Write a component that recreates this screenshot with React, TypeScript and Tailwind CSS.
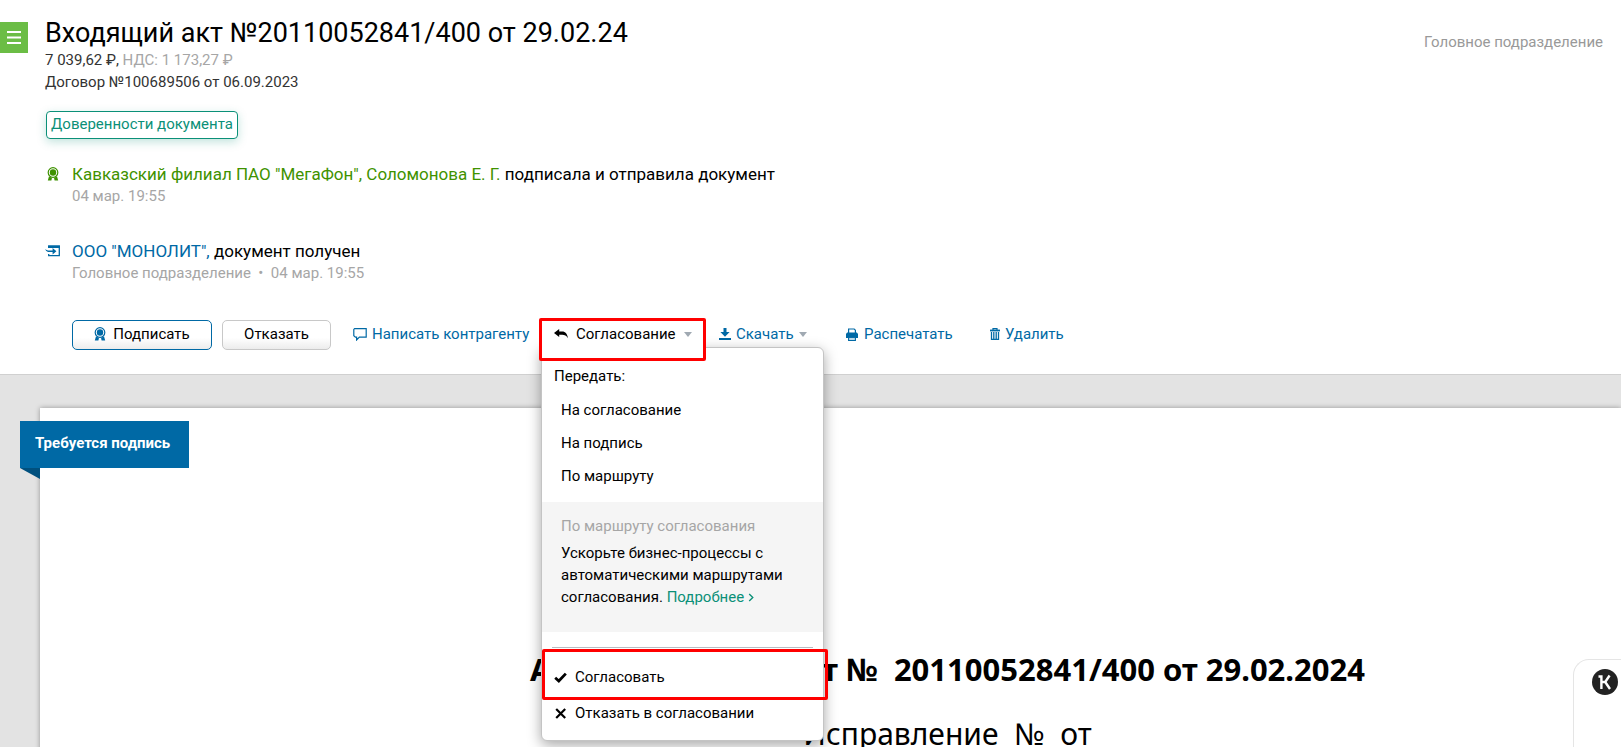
import type { ReactNode } from 'react';

interface IconProps {
  className?: string;
}

function SealIcon({ className }: IconProps) {
  return (
    <svg viewBox="0 0 12 14" className={className} aria-hidden>
      <circle cx="6" cy="5.5" r="4.8" fill="none" stroke="currentColor" strokeWidth="1.2" />
      <circle cx="6" cy="5.5" r="3.2" fill="currentColor" />
      <path d="M2 9.2 0.8 13.6h3.6L5 10.8h2l.6 2.8h3.6L10 9.2 7.8 10.6H4.2Z" fill="currentColor" />
    </svg>
  );
}

function IncomingIcon({ className }: IconProps) {
  return (
    <svg viewBox="0 0 15 12" className={className} aria-hidden>
      <path d="M3.7 3V1h10.6v9.6H3.7V9" fill="none" stroke="currentColor" strokeWidth="1.3" />
      <path d="M3 1h12v2H3Z" fill="currentColor" />
      <path d="M0 4.2 3 5.4h4.6V3L11.4 6.2 7.6 9.4V7H3Q1.2 6.4 0 4.2Z" fill="currentColor" />
    </svg>
  );
}

function CommentIcon({ className }: IconProps) {
  return (
    <svg viewBox="0 0 14 14" className={className} aria-hidden>
      <path d="M1.6 1.6h11.6v8.6H6.4L3.6 13v-2.8H2.4L0.8 8.8V2.4Z" fill="none" stroke="currentColor" strokeWidth="1.2" />
    </svg>
  );
}

function ReplyIcon({ className }: IconProps) {
  return (
    <svg viewBox="0 0 14 10" className={className} aria-hidden>
      <path d="M0 4 5.2 0v2.4h3C11.4 2.4 13.4 5 14 9.2 12.4 6.6 10.6 5.8 8.2 5.8h-3V8Z" fill="currentColor" />
    </svg>
  );
}

function DownloadIcon({ className }: IconProps) {
  return (
    <svg viewBox="0 0 12 12" className={className} aria-hidden>
      <path d="M4.5 0h3v4H10.6L6 8.8 1.4 4h3.1ZM0 10h12v2H0Z" fill="currentColor" />
    </svg>
  );
}

function PrintIcon({ className }: IconProps) {
  return (
    <svg viewBox="0 0 12 13" className={className} aria-hidden>
      <path d="M2.6 5V1h5.6L9.4 2.2V5" fill="none" stroke="currentColor" strokeWidth="1.2" />
      <path d="M1.2 4.6h9.6L12 5.8V10H0V5.8Z" fill="currentColor" />
      <path d="M2.6 9.8h6.8v2.6H2.6Z" fill="white" stroke="currentColor" strokeWidth="1.1" />
    </svg>
  );
}

function TrashIcon({ className }: IconProps) {
  return (
    <svg viewBox="0 0 10 12" className={className} aria-hidden>
      <path d="M3 2V.6h4V2" fill="none" stroke="currentColor" strokeWidth="1.2" />
      <path d="M0 1.6h10v1.8H0Z" fill="currentColor" />
      <path d="M1.5 4v7.4h7V4M3.8 4v7M6.2 4v7" fill="none" stroke="currentColor" strokeWidth="1.3" />
    </svg>
  );
}

function Caret() {
  return (
    <svg viewBox="0 0 8 5" className="h-[5px] w-2 text-[#a0a9b2]" aria-hidden>
      <path d="M0 0h8L4 5Z" fill="currentColor" />
    </svg>
  );
}

function ToolbarLink({ icon, children }: { icon: ReactNode; children: ReactNode }) {
  return (
    <button type="button" className="flex h-7 items-center gap-[5px] whitespace-nowrap text-[#0069a5]">
      {icon}
      {children}
    </button>
  );
}

function ApprovalMenu() {
  return (
    <div className="absolute top-[27px] left-0 w-[283px] rounded-md rounded-tl-none border border-[#c4c4c4] bg-white pt-4 pb-[9px] text-black shadow-[0_4px_14px_rgba(0,0,0,0.35)]">
      <div className="px-3 leading-[24px]">Передать:</div>
      <ul className="mt-[6px] pb-[9px] leading-[33px]">
        {['На согласование', 'На подпись', 'По маршруту'].map((label) => (
          <li key={label}>
            <button type="button" className="block w-full px-[19px] text-left">
              {label}
            </button>
          </li>
        ))}
      </ul>
      <div className="h-[130px] bg-[#f5f5f5] px-[19px] pt-[13px] leading-[22px]">
        <div className="text-[#a6a6a6]">По маршруту согласования</div>
        <p className="mt-[5px]">
          Ускорьте бизнес-процессы с
          <br />
          автоматическими маршрутами
          <br />
          согласования.{' '}
          <a href="#routes" className="inline-flex items-center gap-1 text-[#0b9078]">
            Подробнее
            <svg viewBox="0 0 6 10" className="h-[9px] w-[6px]" aria-hidden>
              <path d="M1 1l4 4-4 4" fill="none" stroke="currentColor" strokeWidth="1.5" />
            </svg>
          </a>
        </p>
      </div>
      <hr className="mx-[10px] mt-[15px] border-[#b8bcc2]" />
      <div className="relative pt-[11px] leading-9">
        <button type="button" className="flex w-full items-center gap-2 px-3">
          <svg viewBox="0 0 13 11" className="h-[11px] w-[13px]" aria-hidden>
            <path d="M1.2 5.8 4.8 9 11.8 1.6" fill="none" stroke="currentColor" strokeWidth="2.8" />
          </svg>
          Согласовать
        </button>
        <button type="button" className="flex w-full items-center gap-2 px-3">
          <svg viewBox="0 0 13 11" className="h-[11px] w-[13px]" aria-hidden>
            <path d="M2.2 1l9 9M11.2 1l-9 9" fill="none" stroke="currentColor" strokeWidth="2.2" />
          </svg>
          Отказать в согласовании
        </button>
        <div className="pointer-events-none absolute top-[1px] -right-[5px] left-0 h-[51px] rounded-xs border-3 border-[#ff0000]" />
      </div>
    </div>
  );
}

function Toolbar() {
  return (
    <div className="mt-9 ml-[27px] flex items-start">
      <button
        type="button"
        className="flex h-[30px] w-[140px] items-center justify-center gap-[7px] rounded-[5px] border border-[#0069a5] bg-linear-to-b from-white from-60% to-[#ececec] pb-[2px] text-black"
      >
        <SealIcon className="h-[14px] w-3 text-[#0069a5]" />
        Подписать
      </button>
      <button
        type="button"
        className="ml-[10px] h-[30px] w-[109px] rounded-[5px] border border-[#c8c8c8] bg-linear-to-b from-white from-60% to-[#ececec] pb-[2px] text-black"
      >
        Отказать
      </button>
      <div className="ml-[22px] w-[188px]">
        <ToolbarLink icon={<CommentIcon className="size-[14px]" />}>Написать контрагенту</ToolbarLink>
      </div>
      <div className="relative z-10 w-[164px] shrink-0">
        <ApprovalMenu />
        <button
          type="button"
          className="relative flex h-7 w-full items-center gap-2 border-l border-[#c4c4c4] bg-white pl-3 text-black"
          aria-expanded
        >
          <ReplyIcon className="h-[10px] w-[14px]" />
          Согласование
          <Caret />
        </button>
        <div className="pointer-events-none absolute -top-[2px] -right-[1px] -left-[2px] h-[43px] rounded-xs border-3 border-[#ff0000]" />
      </div>
      <div className="ml-[14px] w-[126px]">
        <ToolbarLink icon={<DownloadIcon className="size-3" />}>
          Скачать
          <Caret />
        </ToolbarLink>
      </div>
      <div className="w-[145px]">
        <ToolbarLink icon={<PrintIcon className="h-[13px] w-[14px]" />}>Распечатать</ToolbarLink>
      </div>
      <ToolbarLink icon={<TrashIcon className="h-3 w-[10px]" />}>Удалить</ToolbarLink>
    </div>
  );
}

function DocumentHeader() {
  return (
    <header className="relative z-10 flex items-start bg-white pt-[17px] pb-6">
      <button type="button" aria-label="Меню" className="mt-[5px] flex h-[31px] w-7 items-center justify-center bg-[#6bbd45] text-white">
        <svg viewBox="0 0 14 13" className="h-[13px] w-[14px]" aria-hidden>
          <path d="M0 1h14M0 6.5h14M0 12h14" stroke="currentColor" strokeWidth="2" />
        </svg>
      </button>
      <div className="ml-[17px] flex-1">
        <h1 className="text-[27px] leading-8 text-black">Входящий акт №20110052841/400 от 29.02.24</h1>
        <div className="leading-[22px] text-[#333333]">
          7 039,62 ₽, <span className="text-[#a6a6a6]">НДС: 1 173,27 ₽</span>
        </div>
        <div className="leading-[22px] text-[#333333]">Договор №100689506 от 06.09.2023</div>
        <button
          type="button"
          className="mt-[18px] ml-[1px] block h-7 w-48 rounded-sm border border-[#0b9078] pb-[2px] whitespace-nowrap text-[#0b9078] shadow-[0_3px_10px_rgba(11,144,120,0.25)]"
        >
          Доверенности документа
        </button>

        <div className="mt-6 flex">
          <SealIcon className="mt-1 ml-[2px] h-[14px] w-3 text-[#3f9200]" />
          <div className="ml-[13px] leading-[22px]">
            <div className="text-[17px] text-black">
              <a href="#sender" className="text-[#3f9200]">
                Кавказский филиал ПАО "МегаФон", Соломонова Е. Г.
              </a>{' '}
              подписала и отправила документ
            </div>
            <div className="text-[#a6a6a6]">04 мар. 19:55</div>
          </div>
        </div>

        <div className="mt-[33px] flex">
          <IncomingIcon className="mt-[5px] h-3 w-[15px] text-[#0069a5]" />
          <div className="ml-3 leading-[22px]">
            <div className="text-[17px] text-black">
              <a href="#receiver" className="text-[#0069a5]">
                ООО "МОНОЛИТ",
              </a>{' '}
              документ получен
            </div>
            <div className="text-[#a6a6a6]">Головное подразделение&nbsp; •&nbsp; 04 мар. 19:55</div>
          </div>
        </div>

        <Toolbar />
      </div>
      <div className="absolute top-[31px] right-[18px] leading-[22px] text-[#999999]">Головное подразделение</div>
    </header>
  );
}

function DocumentPreview() {
  return (
    <main className="flex flex-1 flex-col border-t border-[#d0d0d0] bg-[#e3e3e3] pt-[33px] pl-10">
      <article className="relative flex-1 bg-white font-['Noto_Sans',sans-serif] text-[30px] text-black shadow-[0_0_5px_rgba(0,0,0,0.35)]">
        <div className="absolute top-[13px] -left-5 font-['Roboto',sans-serif] text-[15px]">
          <div className="flex h-[47px] w-[169px] items-center bg-[#0069a5] pb-[2px] pl-[15px] font-bold text-white">Требуется подпись</div>
          <svg viewBox="0 0 20 11" className="h-[11px] w-5" aria-hidden>
            <path d="M0 0h20v11Z" fill="#00507e" />
          </svg>
        </div>
        <h2 className="ml-[490px] flex w-[835px] justify-between pt-[241px] text-[31px] leading-10 font-bold whitespace-nowrap">
          <span>Акт</span>
          <span>работ №&nbsp; 20110052841/400 от 29.02.2024</span>
        </h2>
        <p className="mt-[25px] ml-[490px] w-[835px] text-center leading-10">Исправление&nbsp; №&nbsp; от</p>
      </article>
    </main>
  );
}

function AssistantWidget() {
  return (
    <aside className="fixed right-0 bottom-0 z-20 h-[88px] w-12 rounded-tl-2xl border-t border-l border-[#e5e5e5] bg-white pt-[9px] pl-[18px]">
      <button type="button" aria-label="Контур" className="block size-[26px] rounded-full bg-[#222222] text-white">
        <svg viewBox="0 0 26 26" className="size-[26px]" fill="none" stroke="currentColor" strokeWidth="2.4" aria-hidden>
          <path d="M6.5 7.5H9.4V20M10 13h3.2L17.6 6.5M13.2 13l4.8 7" />
        </svg>
      </button>
    </aside>
  );
}

export default function App() {
  return (
    <div className="flex h-screen flex-col overflow-hidden bg-white font-['Roboto',sans-serif] text-[15px]">
      <DocumentHeader />
      <DocumentPreview />
      <AssistantWidget />
    </div>
  );
}
